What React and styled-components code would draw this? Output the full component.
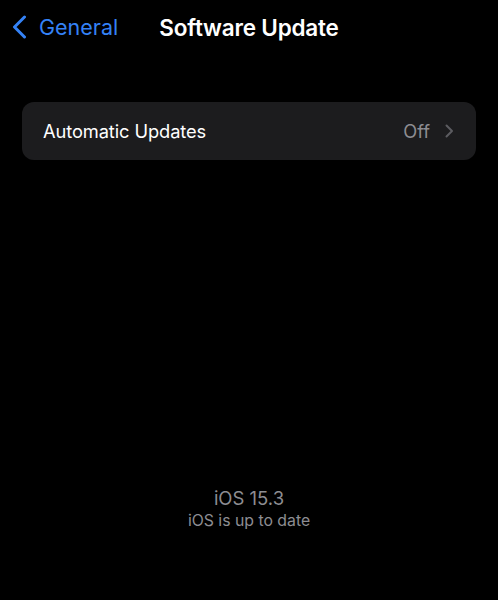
import styled, { createGlobalStyle } from 'styled-components'

const Global = createGlobalStyle`
body {
  margin: 0;
  background: #000;
  font-family: Inter, "Noto Sans", sans-serif;
  -webkit-font-smoothing: antialiased;
}
`

const Screen = styled.div`
width: 498px;
height: 600px;
display: flex;
flex-direction: column;
background: #000;
overflow: hidden;
`

const NavBar = styled.div`
position: relative;
height: 54px;
display: flex;
align-items: center;
justify-content: center;
`

const BackButton = styled.div`
position: absolute;
left: 12px;
top: 14px;
display: flex;
align-items: center;
gap: 12px;
font-size: 21.5px;
color: #3482f6;
`

const Title = styled.h1`
margin: 0;
font-size: 22.5px;
font-weight: 600;
color: #fff;
letter-spacing: -0.2px;
`

const Card = styled.div`
margin: 48px 22px 0;
height: 58px;
border-radius: 12px;
background: #1c1c1e;
display: flex;
align-items: center;
padding: 0 22px 0 21px;
`

const RowLabel = styled.span`
flex: 1;
font-size: 18.3px;
color: #fff;
letter-spacing: -0.1px;
`

const RowValue = styled.span`
font-size: 18.3px;
color: #8d8d92;
margin-right: 15px;
`

const Footer = styled.div`
margin-top: auto;
padding-bottom: 70px;
display: flex;
flex-direction: column;
align-items: center;
gap: 2px;
color: #8d8d92;
`

const Version = styled.span`
font-size: 18.5px;
`

const Status = styled.span`
font-size: 15.8px;
`

const BackChevron = () => (
  <svg width="15" height="24" viewBox="0 0 15 24">
    <path d="M12.5 2 L2.5 12 L12.5 22" fill="none" stroke="currentColor" strokeWidth="3" strokeLinecap="round" strokeLinejoin="round" />
  </svg>
)

const RowChevron = () => (
  <svg width="9" height="14" viewBox="0 0 9 14">
    <path d="M1.5 1.5 L7 7 L1.5 12.5" fill="none" stroke="#5c5c60" strokeWidth="2" strokeLinecap="round" strokeLinejoin="round" />
  </svg>
)

export default function App() {
  return (
    <>
      <Global />
      <Screen>
        <NavBar>
          <BackButton>
            <BackChevron />
            <span>General</span>
          </BackButton>
          <Title>Software Update</Title>
        </NavBar>
        <Card>
          <RowLabel>Automatic Updates</RowLabel>
          <RowValue>Off</RowValue>
          <RowChevron />
        </Card>
        <Footer>
          <Version>iOS 15.3</Version>
          <Status>iOS is up to date</Status>
        </Footer>
      </Screen>
    </>
  )
}
